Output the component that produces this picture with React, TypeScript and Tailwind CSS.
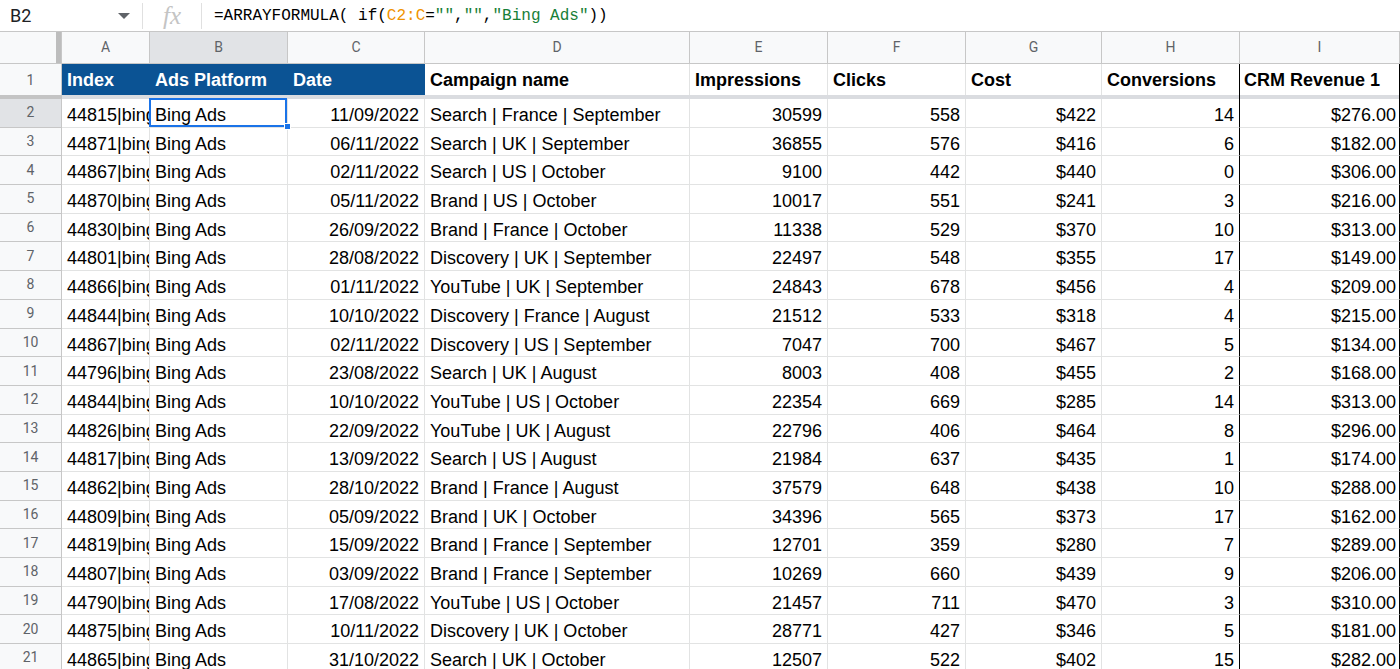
import React from "react";

type Row = {
  n: number;
  idx: string;
  date: string;
  name: string;
  imp: string;
  clicks: string;
  cost: string;
  conv: string;
  rev: string;
};

const rows: Row[] = [
  { n: 2, idx: "44815|bing", date: "11/09/2022", name: "Search | France | September", imp: "30599", clicks: "558", cost: "$422", conv: "14", rev: "$276.00" },
  { n: 3, idx: "44871|bing", date: "06/11/2022", name: "Search | UK | September", imp: "36855", clicks: "576", cost: "$416", conv: "6", rev: "$182.00" },
  { n: 4, idx: "44867|bing", date: "02/11/2022", name: "Search | US | October", imp: "9100", clicks: "442", cost: "$440", conv: "0", rev: "$306.00" },
  { n: 5, idx: "44870|bing", date: "05/11/2022", name: "Brand | US | October", imp: "10017", clicks: "551", cost: "$241", conv: "3", rev: "$216.00" },
  { n: 6, idx: "44830|bing", date: "26/09/2022", name: "Brand | France | October", imp: "11338", clicks: "529", cost: "$370", conv: "10", rev: "$313.00" },
  { n: 7, idx: "44801|bing", date: "28/08/2022", name: "Discovery | UK | September", imp: "22497", clicks: "548", cost: "$355", conv: "17", rev: "$149.00" },
  { n: 8, idx: "44866|bing", date: "01/11/2022", name: "YouTube | UK | September", imp: "24843", clicks: "678", cost: "$456", conv: "4", rev: "$209.00" },
  { n: 9, idx: "44844|bing", date: "10/10/2022", name: "Discovery | France | August", imp: "21512", clicks: "533", cost: "$318", conv: "4", rev: "$215.00" },
  { n: 10, idx: "44867|bing", date: "02/11/2022", name: "Discovery | US | September", imp: "7047", clicks: "700", cost: "$467", conv: "5", rev: "$134.00" },
  { n: 11, idx: "44796|bing", date: "23/08/2022", name: "Search | UK | August", imp: "8003", clicks: "408", cost: "$455", conv: "2", rev: "$168.00" },
  { n: 12, idx: "44844|bing", date: "10/10/2022", name: "YouTube | US | October", imp: "22354", clicks: "669", cost: "$285", conv: "14", rev: "$313.00" },
  { n: 13, idx: "44826|bing", date: "22/09/2022", name: "YouTube | UK | August", imp: "22796", clicks: "406", cost: "$464", conv: "8", rev: "$296.00" },
  { n: 14, idx: "44817|bing", date: "13/09/2022", name: "Search | US | August", imp: "21984", clicks: "637", cost: "$435", conv: "1", rev: "$174.00" },
  { n: 15, idx: "44862|bing", date: "28/10/2022", name: "Brand | France | August", imp: "37579", clicks: "648", cost: "$438", conv: "10", rev: "$288.00" },
  { n: 16, idx: "44809|bing", date: "05/09/2022", name: "Brand | UK | October", imp: "34396", clicks: "565", cost: "$373", conv: "17", rev: "$162.00" },
  { n: 17, idx: "44819|bing", date: "15/09/2022", name: "Brand | France | September", imp: "12701", clicks: "359", cost: "$280", conv: "7", rev: "$289.00" },
  { n: 18, idx: "44807|bing", date: "03/09/2022", name: "Brand | France | September", imp: "10269", clicks: "660", cost: "$439", conv: "9", rev: "$206.00" },
  { n: 19, idx: "44790|bing", date: "17/08/2022", name: "YouTube | US | October", imp: "21457", clicks: "711", cost: "$470", conv: "3", rev: "$310.00" },
  { n: 20, idx: "44875|bing", date: "10/11/2022", name: "Discovery | UK | October", imp: "28771", clicks: "427", cost: "$346", conv: "5", rev: "$181.00" },
  { n: 21, idx: "44865|bing", date: "31/10/2022", name: "Search | UK | October", imp: "12507", clicks: "522", cost: "$402", conv: "15", rev: "$282.00" },
];

const cols = "grid grid-cols-[62px_88px_138px_137px_265px_138px_138px_136px_138px_160px]";
const letters = ["A", "B", "C", "D", "E", "F", "G", "H", "I"];

// plain data cell
const Cell = ({ children, right, extra }: { children: React.ReactNode; right?: boolean; extra?: string }) => (
  <div
    className={`overflow-hidden whitespace-nowrap border-r border-b border-[#e2e3e3] px-[5px] pt-[2px] leading-[28px] text-[18px] text-black ${
      right ? "text-right" : "text-left"
    } ${extra ?? ""}`}
  >
    {children}
  </div>
);

export default function App() {
  return (
    <div className="w-[1400px] h-[669px] overflow-hidden bg-white font-['Liberation_Sans',Arial,sans-serif]">
      {/* formula bar */}
      <div className="flex h-[32px] items-center border-b border-[#c7c7c7]">
        <div className="flex w-[142px] items-center justify-between pl-[10px] pr-[12px] font-['Roboto',sans-serif] text-[18px] text-[#202124]">
          <span>B2</span>
          <span className="h-0 w-0 border-x-[6px] border-t-[6px] border-x-transparent border-t-[#5f6368]" />
        </div>
        <div className="h-[26px] w-px bg-[#e0e0e0]" />
        <div className="flex w-[58px] items-center justify-center font-['Liberation_Serif',serif] text-[25px] italic text-[#c4c4c4]">
          fx
        </div>
        <div className="h-[26px] w-px bg-[#e0e0e0]" />
        <div className="pl-[12px] font-['Liberation_Mono',monospace] text-[16px] text-black">
          =ARRAYFORMULA( if(<span className="text-[#f09300]">C2:C</span>=
          <span className="text-[#188038]">""</span>,<span className="text-[#188038]">""</span>,
          <span className="text-[#188038]">"Bing Ads"</span>))
        </div>
      </div>

      {/* column letters */}
      <div className={`${cols} h-[32px] bg-[#f8f9fa] font-['Roboto',sans-serif] text-[14px] text-[#5f6368]`}>
        <div className="flex border-r border-b border-[#c7c7c7]">
          <div className="flex-1" />
          <div className="w-[5px] bg-[#bdbdbd]" />
        </div>
        {letters.map((l) => (
          <div
            key={l}
            className={`flex items-center justify-center border-r border-b border-[#c7c7c7] ${l === "B" ? "bg-[#e1e3e6]" : ""}`}
          >
            {l}
          </div>
        ))}
      </div>

      {/* row 1 headers */}
      <div className={`${cols} h-[31px] text-[18px] font-bold`}>
        <div className="flex items-center justify-center border-r border-[#c7c7c7] bg-[#f8f9fa] font-['Roboto',sans-serif] text-[14px] font-normal text-[#5f6368]">
          1
        </div>
        <div className="col-span-3 grid grid-cols-[88px_138px_137px] bg-[#0b5394] py-px text-white">
          <div className="px-[5px] leading-[30px]">Index</div>
          <div className="px-[5px] leading-[30px]">Ads Platform</div>
          <div className="px-[5px] leading-[30px]">Date</div>
        </div>
        <div className="border-r border-[#e2e3e3] px-[5px] pt-px leading-[30px]">Campaign name</div>
        <div className="border-r border-[#e2e3e3] px-[5px] pt-px leading-[30px]">Impressions</div>
        <div className="border-r border-[#e2e3e3] px-[5px] pt-px leading-[30px]">Clicks</div>
        <div className="border-r border-[#e2e3e3] px-[5px] pt-px leading-[30px]">Cost</div>
        <div className="border-r border-black px-[5px] pt-px leading-[30px]">Conversions</div>
        <div className="whitespace-nowrap border-r border-black px-[4px] pt-px leading-[30px]">CRM Revenue 1</div>
      </div>

      {/* freeze line */}
      <div className={`${cols} h-[4px]`}>
        <div className="bg-[#c4c4c4]" />
        <div className="col-span-7 bg-[#dadce0]" />
        <div className="border-r border-black bg-[#dadce0]" />
        <div className="border-r border-black bg-[#dadce0]" />
      </div>

      {/* data rows */}
      {rows.map((r) => (
        <div key={r.n} className={`${cols} h-[28.7px]`}>
          <div
            className={`flex items-center justify-center border-r border-b border-[#c7c7c7] font-['Roboto',sans-serif] text-[14px] text-[#5f6368] ${
              r.n === 2 ? "bg-[#e1e3e6]" : "bg-[#f8f9fa]"
            }`}
          >
            {r.n}
          </div>
          <Cell extra="pr-0">{r.idx}</Cell>
          {r.n === 2 ? (
            <div className="relative border-b border-r border-[#e2e3e3]">
              <div className="absolute -left-px -top-px bottom-0 right-0 border-2 border-[#1a73e8] px-[4px] pt-[3px] leading-[24px] text-[18px] text-black">
                Bing Ads
              </div>
              <div className="absolute -bottom-[3px] -right-[4px] h-[7px] w-[7px] border border-white bg-[#1a73e8]" />
            </div>
          ) : (
            <Cell>Bing Ads</Cell>
          )}
          <Cell right>{r.date}</Cell>
          <Cell>{r.name}</Cell>
          <Cell right>{r.imp}</Cell>
          <Cell right>{r.clicks}</Cell>
          <Cell right>{r.cost}</Cell>
          <Cell right extra="border-r-black">{r.conv}</Cell>
          <Cell right extra="border-r-black pr-[3px]">{r.rev}</Cell>
        </div>
      ))}
    </div>
  );
}
